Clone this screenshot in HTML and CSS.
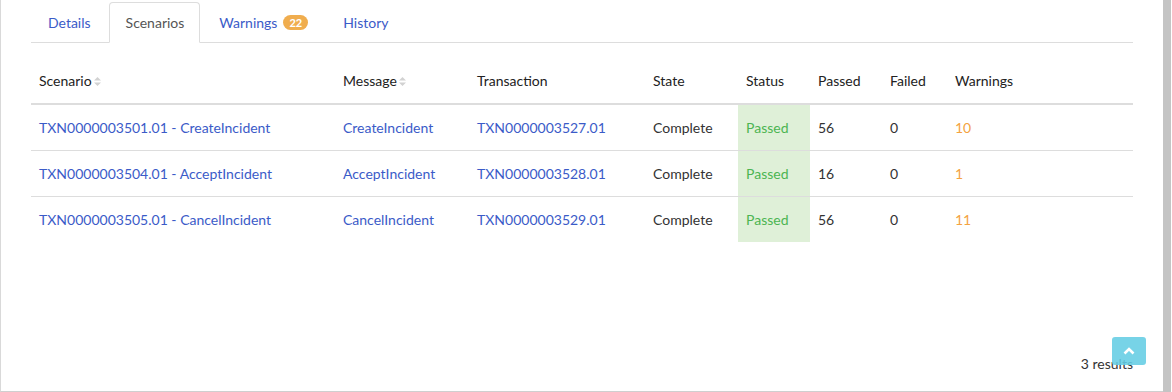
FILE: index.html
```html
<!DOCTYPE html>
<html lang="en">
<head>
  <meta charset="UTF-8">
  <title>Scenarios</title>
  <link rel="stylesheet" href="styles.css">
</head>
<body>

<div class="panel">
  <ul class="nav-tabs">
    <li><a href="#">Details</a></li>
    <li class="active"><a href="#">Scenarios</a></li>
    <li><a href="#">Warnings <span class="badge">22</span></a></li>
    <li><a href="#">History</a></li>
  </ul>

  <table class="results-table">
    <colgroup>
      <col class="c-scenario"><col class="c-message"><col class="c-txn"><col class="c-state">
      <col class="c-status"><col class="c-passed"><col class="c-failed"><col class="c-warn">
    </colgroup>
    <thead>
      <tr>
        <th>Scenario<svg class="sort" width="7" height="11" viewBox="0 0 7 11"><path d="M0 4.5 L3.5 1 L7 4.5 Z M0 6.5 L3.5 10 L7 6.5 Z"/></svg></th>
        <th>Message<svg class="sort" width="7" height="11" viewBox="0 0 7 11"><path d="M0 4.5 L3.5 1 L7 4.5 Z M0 6.5 L3.5 10 L7 6.5 Z"/></svg></th>
        <th>Transaction</th>
        <th>State</th>
        <th>Status</th>
        <th>Passed</th>
        <th>Failed</th>
        <th>Warnings</th>
      </tr>
    </thead>
    <tbody>
      <tr>
        <td><a href="#">TXN0000003501.01 - CreateIncident</a></td>
        <td><a href="#">CreateIncident</a></td>
        <td><a href="#">TXN0000003527.01</a></td>
        <td>Complete</td>
        <td class="success">Passed</td>
        <td>56</td>
        <td>0</td>
        <td class="warn">10</td>
      </tr>
      <tr>
        <td><a href="#">TXN0000003504.01 - AcceptIncident</a></td>
        <td><a href="#">AcceptIncident</a></td>
        <td><a href="#">TXN0000003528.01</a></td>
        <td>Complete</td>
        <td class="success">Passed</td>
        <td>16</td>
        <td>0</td>
        <td class="warn">1</td>
      </tr>
      <tr>
        <td><a href="#">TXN0000003505.01 - CancelIncident</a></td>
        <td><a href="#">CancelIncident</a></td>
        <td><a href="#">TXN0000003529.01</a></td>
        <td>Complete</td>
        <td class="success">Passed</td>
        <td>56</td>
        <td>0</td>
        <td class="warn">11</td>
      </tr>
    </tbody>
  </table>

  <div class="result-count">3 results</div>
</div>

<div class="scrollbar"></div>

<!-- back to top -->
<button id="to-top"><svg width="12" height="8" viewBox="0 0 12 8"><path d="M1.5 6.5 L6 2 L10.5 6.5" fill="none" stroke="#fff" stroke-width="2.6"/></svg></button>

</body>
</html>
```

FILE: styles.css
```css
body {
  margin: 0;
  height: 392px;
  display: flex;
  background: #fff;
  font-family: Lato, "Open Sans", sans-serif;
  font-size: 14px;
  color: #333;
  overflow: hidden;
}

a {
  color: #3b5bc8;
  text-decoration: none;
}

.panel {
  flex: 1;
  box-sizing: border-box;
  height: 392px;
  padding: 0 30px;
  border-left: 1px solid #d9d9d9;
  border-bottom: 1px solid #cfcfcf;
}

.scrollbar {
  width: 8px;
  margin-right: 1px;
  background: #c4c4c4;
}

/* tabs */
.nav-tabs {
  list-style: none;
  margin: 2px 0 0;
  padding: 0;
  display: flex;
  border-bottom: 1px solid #ddd;
}

.nav-tabs li {
  margin-right: 2px;
  margin-bottom: -1px;
}

.nav-tabs a {
  display: flex;
  align-items: center;
  padding: 10px 15px 10px 16px;
  line-height: 19px;
  border: 1px solid transparent;
  border-radius: 4px 4px 0 0;
}

.nav-tabs .active a {
  color: #555;
  background: #fff;
  border-color: #ddd #ddd transparent;
}

.badge {
  display: inline-block;
  margin-left: 6px;
  padding: 0 6px;
  height: 15px;
  line-height: 15px;
  border-radius: 8px;
  background: #f0ad4e;
  color: #fff;
  font-size: 11px;
  font-weight: bold;
}

/* table */
.results-table {
  width: 100%;
  margin-top: 18px;
  border-collapse: collapse;
  table-layout: fixed;
}

.c-scenario { width: 304px; }
.c-message { width: 134px; }
.c-txn { width: 176px; }
.c-state { width: 93px; }
.c-status { width: 72px; }
.c-passed { width: 72px; }
.c-failed { width: 65px; }
.c-warn { width: 186px; }

.results-table th {
  text-align: left;
  font-weight: normal;
  color: #222;
  padding: 10px 8px 12px;
  line-height: 20px;
  border-bottom: 2px solid #ddd;
  white-space: nowrap;
}

.results-table td {
  padding: 12px 8px;
  line-height: 21px;
  border-top: 1px solid #ddd;
  white-space: nowrap;
}

.results-table tbody tr:first-child td {
  border-top: none;
}

.sort {
  margin-left: 2px;
  vertical-align: -1px;
  fill: #d2d2d2;
}

.results-table td.success {
  background: #dff0d8;
  color: #4cb552;
}

.results-table td.warn {
  color: #f4a33f;
}

.result-count {
  margin-top: 112px;
  text-align: right;
  line-height: 20px;
}

#to-top {
  position: fixed;
  left: 1112px;
  top: 337px;
  width: 34px;
  height: 28px;
  padding: 0;
  border: none;
  border-radius: 3px;
  background: rgba(100, 205, 228, 0.88);
  display: flex;
  align-items: center;
  justify-content: center;
}
```
